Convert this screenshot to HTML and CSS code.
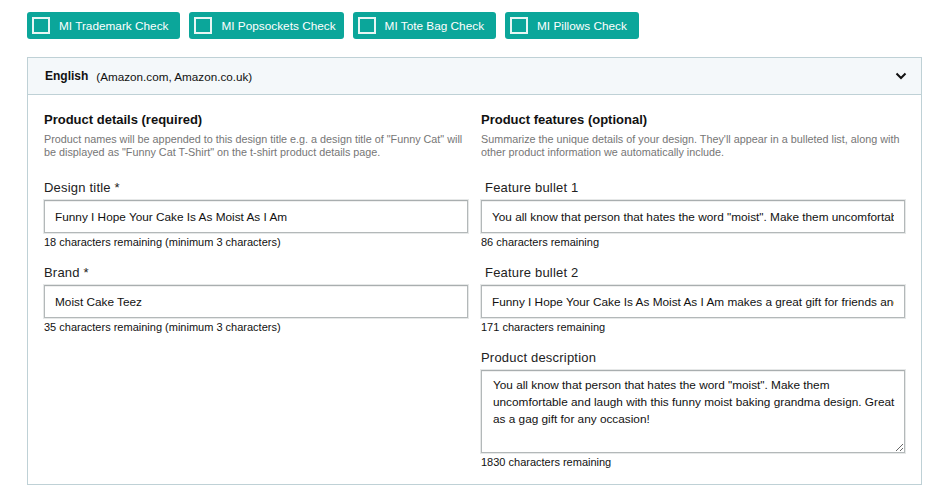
FILE: index.html
```html
<!DOCTYPE html>
<html lang="en">
<head>
    <meta charset="UTF-8">
    <meta name="viewport" content="width=device-width, initial-scale=1.0">
    <title>Product Listing</title>
    <link rel="stylesheet" href="styles.css">
</head>
<body>
    <div class="check-row">
        <label class="check-btn"><span class="check-box"></span>MI Trademark Check</label>
        <label class="check-btn tight"><span class="check-box"></span>MI Popsockets Check</label>
        <label class="check-btn"><span class="check-box"></span>MI Tote Bag Check</label>
        <label class="check-btn"><span class="check-box"></span>MI Pillows Check</label>
    </div>

    <div class="panel">
        <div class="panel-head">
            <span class="lang">English</span>
            <span class="markets">(Amazon.com, Amazon.co.uk)</span>
            <svg class="chevron" width="12" height="8" viewBox="0 0 12 8">
                <path d="M1.5 1.5 L6 6 L10.5 1.5" fill="none" stroke="#111" stroke-width="2"/>
            </svg>
        </div>
        <div class="panel-body">
            <div class="col">
                <h2 class="col-title">Product details (required)</h2>
                <p class="col-desc">Product names will be appended to this design title e.g. a design title of "Funny Cat" will be displayed as "Funny Cat T-Shirt" on the t-shirt product details page.</p>

                <div class="field">
                    <label class="field-label">Design title *</label>
                    <input class="text-input" type="text" value="Funny I Hope Your Cake Is As Moist As I Am">
                    <p class="hint">18 characters remaining (minimum 3 characters)</p>
                </div>
                <div class="field">
                    <label class="field-label">Brand *</label>
                    <input class="text-input" type="text" value="Moist Cake Teez">
                    <p class="hint">35 characters remaining (minimum 3 characters)</p>
                </div>
            </div>
            <div class="col">
                <h2 class="col-title">Product features (optional)</h2>
                <p class="col-desc">Summarize the unique details of your design. They'll appear in a bulleted list, along with other product information we automatically include.</p>

                <div class="field">
                    <label class="field-label indent">Feature bullet 1</label>
                    <input class="text-input" type="text" value="You all know that person that hates the word &quot;moist&quot;. Make them uncomfortable and laugh with this funny moist baking grandma design.">
                    <p class="hint">86 characters remaining</p>
                </div>
                <div class="field">
                    <label class="field-label indent">Feature bullet 2</label>
                    <input class="text-input" type="text" value="Funny I Hope Your Cake Is As Moist As I Am makes a great gift for friends and family.">
                    <p class="hint">171 characters remaining</p>
                </div>
                <div class="field">
                    <label class="field-label">Product description</label>
                    <textarea class="text-area">You all know that person that hates the word "moist". Make them uncomfortable and laugh with this funny moist baking grandma design. Great as a gag gift for any occasion!</textarea>
                    <p class="hint">1830 characters remaining</p>
                </div>
            </div>
        </div>
    </div>
</body>
</html>
```

FILE: styles.css
```css
:root{
    --teal: #0ba69a;
    --panel-border: #bfd1d6;
    --head-bg: #f4f8fa;
    --text: #111;
    --muted: #767676;
}

*{
    box-sizing: border-box;
    margin: 0;
    font-family: 'Liberation Sans', Arial, sans-serif;
}

body{
    background-color: #fff;
    padding: 12px 27px 0 27px;
    color: var(--text);
}

.check-row{
    display: flex;
    gap: 9px;
}

.check-btn{
    display: flex;
    align-items: center;
    height: 27px;
    padding: 0 12px 0 5px;
    background-color: var(--teal);
    border-radius: 3px;
    color: #fff;
    font-size: 11.8px;
}

.check-btn.tight{
    padding-right: 8px;
}

.check-box{
    width: 18px;
    height: 17px;
    border: 2px solid #e8f6f4;
    margin-right: 9px;
}

.panel{
    margin-top: 18px;
    width: 895px;
    border: 1px solid var(--panel-border);
}

.panel-head{
    display: flex;
    align-items: center;
    height: 37px;
    padding: 0 14px 0 17px;
    background-color: var(--head-bg);
    border-bottom: 1px solid var(--panel-border);
    font-size: 11.7px;
}

.lang{
    font-weight: 700;
    font-size: 12px;
    margin-right: 8px;
}

.chevron{
    margin-left: auto;
}

.panel-body{
    display: grid;
    grid-template-columns: 424px 424px;
    column-gap: 13px;
    padding: 16px 16px 15px 16px;
}

.col-title{
    font-size: 13px;
    font-weight: 700;
    line-height: 17px;
}

.col-desc{
    margin-top: 5px;
    font-size: 10.8px;
    line-height: 13px;
    color: var(--muted);
}

.field{
    margin-top: 21px;
}

.field + .field{
    margin-top: 16px;
}

.field-label{
    display: block;
    font-size: 13px;
    line-height: 16px;
    color: #222;
    margin-bottom: 4px;
    letter-spacing: 0.2px;
}

.field-label.indent{
    padding-left: 4px;
}

.text-input, .text-area{
    display: block;
    width: 424px;
    border: 1px solid #b3b8b9;
    border-top-color: #a9aeaf;
    box-shadow: inset 0 1px 0 rgba(0, 0, 0, 0.06), 0 0 0 1px #e6e8e8;
    background: #fff;
    font-size: 11.8px;
    color: var(--text);
    padding: 0 10px;
    outline: none;
}

.text-input{
    height: 33px;
}

.text-area{
    height: 83px;
    padding: 6px 8px 6px 11px;
    line-height: 17px;
    resize: vertical;
}

.hint{
    margin-top: 3px;
    font-size: 11px;
    line-height: 13px;
    color: var(--text);
}
```
